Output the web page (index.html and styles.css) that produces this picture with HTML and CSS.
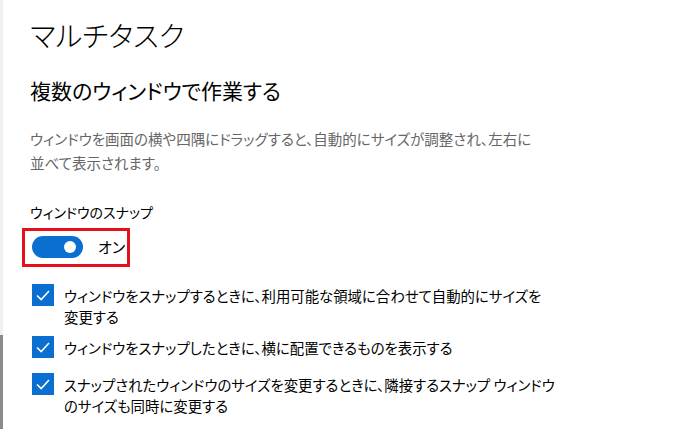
FILE: index.html
```html
<!DOCTYPE html>
<html lang="ja">
<head>
    <meta charset="UTF-8">
    <title>マルチタスク</title>
    <link rel="stylesheet" href="styles.css">
</head>
<body>
    <div class="frame">
        <div class="edge">
            <div class="edge-top"></div>
            <div class="edge-bottom"></div>
        </div>
        <main class="page">
            <h1 class="title">マルチタスク</h1>
            <h2 class="section">複数のウィンドウで作業する</h2>
            <p class="desc">ウィンドウを画面の横や四隅にドラッグすると、自動的にサイズが調整され、左右に<br>並べて表示されます。</p>

            <div class="label">ウィンドウのスナップ</div>
            <div class="highlight">
                <span class="toggle"><span class="knob"></span></span>
                <span class="toggle-text">オン</span>
            </div>

            <ul class="checks">
                <li class="check">
                    <span class="box"><svg viewBox="0 0 22 22"><path d="M5 11.5 L9.2 15.5 L17 7" fill="none" stroke="#fff" stroke-width="1.6"/></svg></span>
                    <span class="check-text">ウィンドウをスナップするときに、利用可能な領域に合わせて自動的にサイズを<br>変更する</span>
                </li>
                <li class="check">
                    <span class="box"><svg viewBox="0 0 22 22"><path d="M5 11.5 L9.2 15.5 L17 7" fill="none" stroke="#fff" stroke-width="1.6"/></svg></span>
                    <span class="check-text">ウィンドウをスナップしたときに、横に配置できるものを表示する</span>
                </li>
                <li class="check">
                    <span class="box"><svg viewBox="0 0 22 22"><path d="M5 11.5 L9.2 15.5 L17 7" fill="none" stroke="#fff" stroke-width="1.6"/></svg></span>
                    <span class="check-text">スナップされたウィンドウのサイズを変更するときに、隣接するスナップ ウィンドウ<br>のサイズも同時に変更する</span>
                </li>
            </ul>
        </main>
    </div>
</body>
</html>
```

FILE: styles.css
```css
html, body {
    margin: 0;
    background: #fff;
}
body {
    font-family: "Noto Sans CJK JP", "Noto Sans", sans-serif;
    font-feature-settings: "palt";
    color: #000;
}
.frame {
    display: flex;
    height: 429px;
    overflow: hidden;
}
.edge {
    display: flex;
    flex-direction: column;
    width: 3px;
}
.edge-top {
    height: 335px;
    background: #f0f0f0;
}
.edge-bottom {
    flex: 1;
    background: #8a8a8a;
}
.page {
    padding: 13px 0 0 27px;
    flex: 1;
}
.title {
    margin: 0;
    font-size: 28.5px;
    font-weight: 300;
    line-height: 44px;
}
.section {
    margin: 18px 0 0;
    font-size: 21px;
    font-weight: 400;
    line-height: 30px;
}
.desc {
    margin: 22px 0 0;
    font-size: 14.5px;
    line-height: 24px;
    color: #666;
}
.label {
    margin-top: 26px;
    font-size: 14px;
    line-height: 22px;
}
.highlight {
    display: inline-flex;
    align-items: center;
    gap: 15px;
    margin: 5px 0 0 -8px;
    padding: 5px 2px 6px 7px;
    border: 3px solid #e5101c;
}
.toggle {
    display: flex;
    align-items: center;
    justify-content: flex-end;
    width: 51px;
    height: 22px;
    padding: 0 7px;
    box-sizing: border-box;
    border-radius: 11px;
    background: #0a6fd1;
}
.knob {
    width: 12px;
    height: 12px;
    border-radius: 50%;
    background: #fff;
}
.toggle-text {
    font-size: 15px;
    line-height: 22px;
}
.checks {
    list-style: none;
    margin: 17px 0 0;
    padding: 0;
}
.check {
    display: flex;
    gap: 10px;
    min-height: 28px;
    margin-bottom: 9px;
}
.box {
    flex: none;
    width: 22px;
    height: 22px;
    margin-left: 2px;
    background: #0a6fd1;
}
.box svg {
    display: block;
    width: 22px;
    height: 22px;
}
.check-text {
    margin-top: 1px;
    font-size: 14.4px;
    line-height: 21px;
}
```
